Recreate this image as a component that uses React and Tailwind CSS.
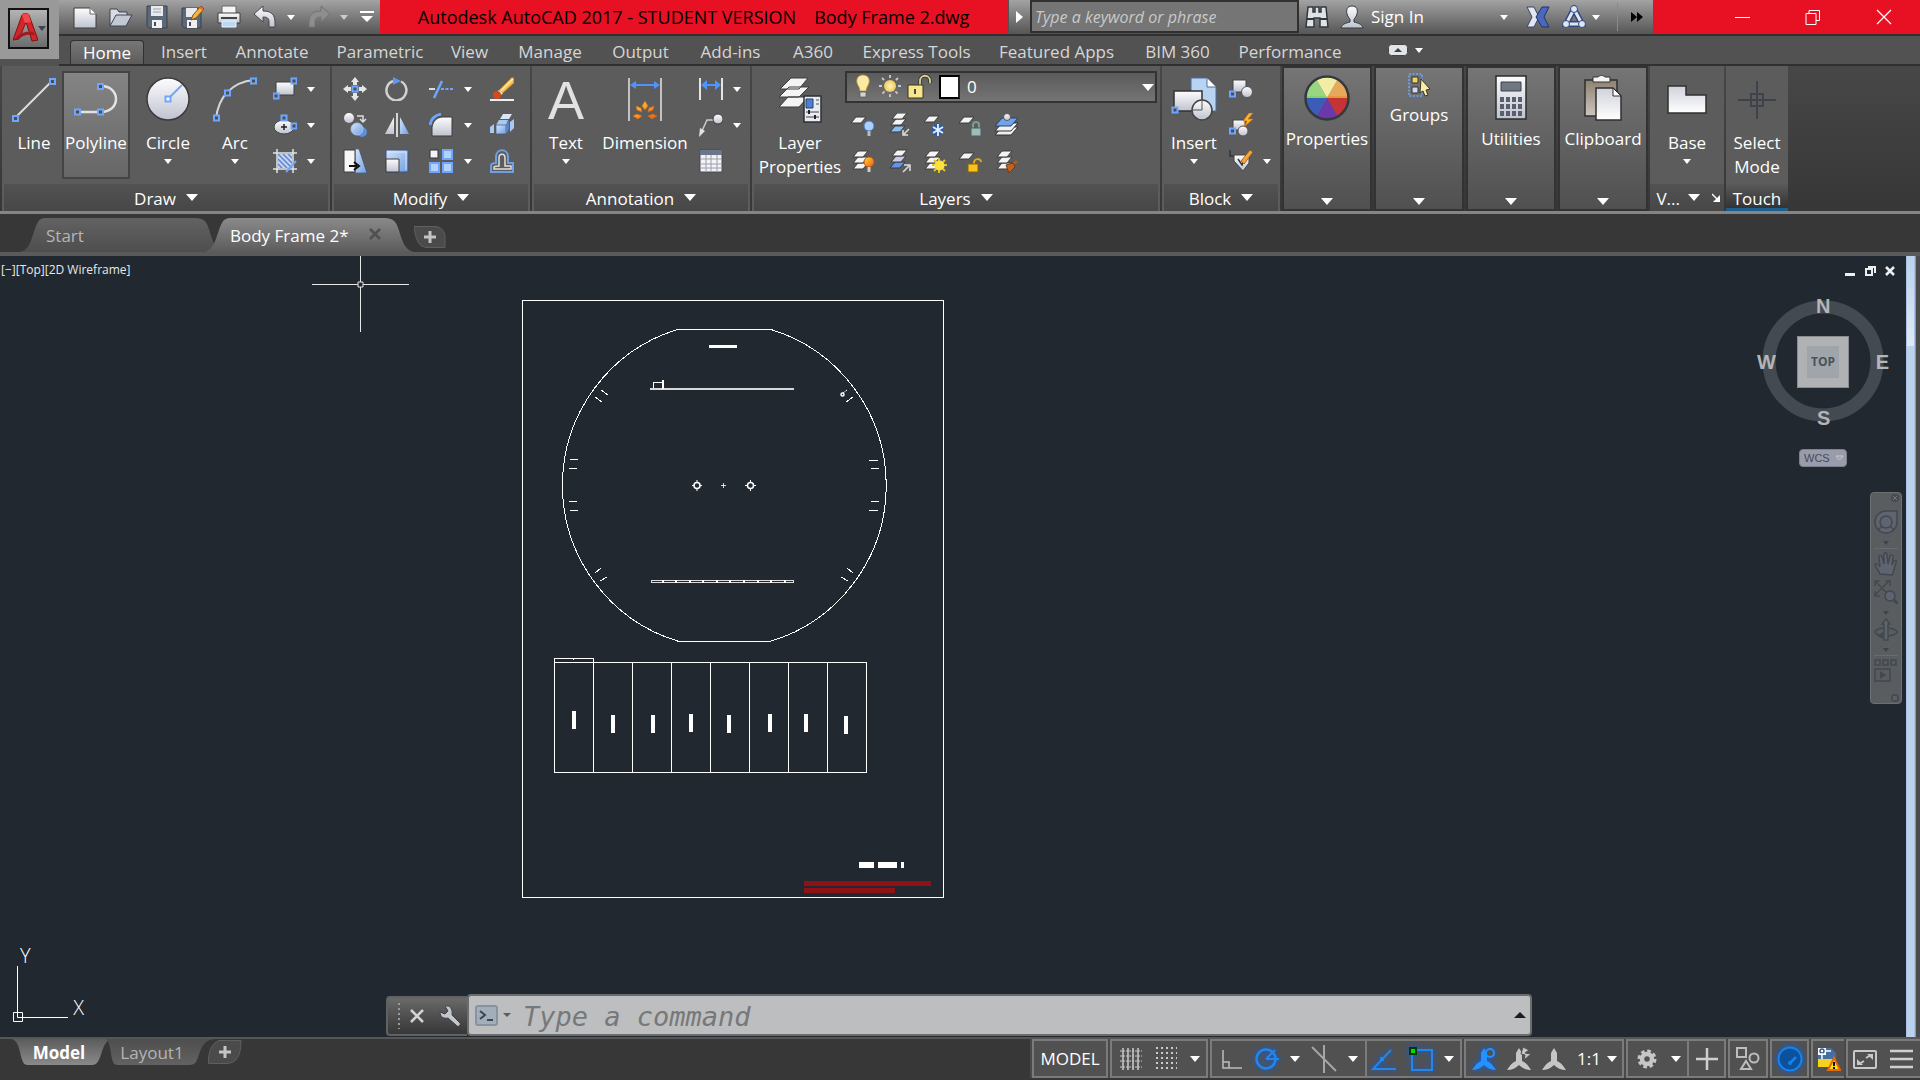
import React from "react";

const cx = (...names) => names.filter(Boolean).join(" ");

/* ---------- shared drawing helpers ---------- */

function Defs() {
  return (
    <svg width="0" height="0" className="absolute" aria-hidden="true">
      <defs>
        <linearGradient id="paper" x1="0" y1="0" x2="0" y2="1">
          <stop offset="0" stopColor="#fdfdfe" />
          <stop offset="1" stopColor="#bfc3cf" />
        </linearGradient>
        <linearGradient id="sheet" x1="0" y1="0" x2="0" y2="1">
          <stop offset="0" stopColor="#cfd2da" />
          <stop offset="1" stopColor="#ffffff" />
        </linearGradient>
        <linearGradient id="sky" x1="0" y1="0" x2="1" y2="1">
          <stop offset="0" stopColor="#d6e6fb" />
          <stop offset="1" stopColor="#6f9fdf" />
        </linearGradient>
        <linearGradient id="fire" x1="0" y1="0" x2="1" y2="1">
          <stop offset="0" stopColor="#ffd83a" />
          <stop offset="1" stopColor="#ee5a12" />
        </linearGradient>
        <linearGradient id="board" x1="0" y1="0" x2="0" y2="1">
          <stop offset="0" stopColor="#8d8171" />
          <stop offset="1" stopColor="#cdc6bf" />
        </linearGradient>
        <linearGradient id="tabOn" x1="0" y1="0" x2="0" y2="1">
          <stop offset="0" stopColor="#8a8a8a" />
          <stop offset="1" stopColor="#5c5c5c" />
        </linearGradient>
        <linearGradient id="tabOff" x1="0" y1="0" x2="0" y2="1">
          <stop offset="0" stopColor="#626262" />
          <stop offset="1" stopColor="#4e4e4e" />
        </linearGradient>
        <linearGradient id="footOn" x1="0" y1="0" x2="0" y2="1">
          <stop offset="0" stopColor="#5c5c5c" />
          <stop offset="1" stopColor="#8a8a8a" />
        </linearGradient>
        <linearGradient id="footOff" x1="0" y1="0" x2="0" y2="1">
          <stop offset="0" stopColor="#4e4e4e" />
          <stop offset="1" stopColor="#626262" />
        </linearGradient>
        <radialGradient id="sun">
          <stop offset="0" stopColor="#fff6b8" />
          <stop offset="1" stopColor="#f0c860" />
        </radialGradient>
      </defs>
    </svg>
  );
}

function Ico({ w = 24, h = 24, className, children }) {
  return (
    <svg width={w} height={h} viewBox={`0 0 ${w} ${h}`} fill="none" className={cx("shrink-0", className)} aria-hidden="true">
      {children}
    </svg>
  );
}

function Tri({ size = "sm", className }) {
  if (size === "lg")
    return (
      <Ico w={12} h={7} className={className}>
        <path d="M0 0h12L6 7z" fill="#fff" />
      </Ico>
    );
  return (
    <Ico w={8} h={5} className={className}>
      <path d="M0 0h8L4 5z" fill="#fff" />
    </Ico>
  );
}

/* blue grip square, centred on x,y */
const Grip = ({ x, y, fill = "#4d4d4d" }) => (
  <rect x={x - 2.5} y={y - 2.5} width="5" height="5" fill={fill} stroke="#6ea6ff" strokeWidth="2" />
);

const Sheet = ({ x, y, fill = "#f4f4f6" }) => (
  <path d={`M${x + 5} ${y}h10l-5 6h-10z`} fill={fill} stroke="#3a3a3a" strokeWidth="1" />
);

/* ---------- quick access icons ---------- */

const NewIcon = () => (
  <Ico><path d="M1 3h16l6 6v14H1z" fill="url(#paper)" stroke="#3c3c3c" /><path d="M17 3v6h6" fill="#fff" stroke="#666" /></Ico>
);
const OpenIcon = () => (
  <Ico><path d="M1 21V4h7l2 3h8v4" fill="#d9dce2" stroke="#3c4450" /><path d="M1 21l6-11h16l-6 11z" fill="#c3c9d4" stroke="#3c4450" /></Ico>
);
const SaveIcon = () => (
  <Ico w={22}><path d="M1 1h20v22H3l-2-2z" fill="#5d6878" stroke="#39424f" /><path d="M5 1h12v10H5z" fill="#e9ebef" /><path d="M7 4h8M7 7h8" stroke="#9aa2ad" /><path d="M6 15h10v8H6z" fill="#f1f1f4" /><path d="M8 17h2v4H8z" fill="#444c58" /></Ico>
);
const SaveAsIcon = () => (
  <Ico><path d="M1 3h19v20H3l-2-2z" fill="#5d6878" stroke="#39424f" /><path d="M5 3h11v9H5z" fill="#e9ebef" /><path d="M6 15h10v8H6z" fill="#f1f1f4" /><path d="M8 17h2v4H8z" fill="#444c58" /><path d="M10 15l2-5 8-9 3 3-8 9z" fill="#f5b73b" stroke="#8a4b12" /><path d="M19 2l3 3" stroke="#e8672c" strokeWidth="2" /></Ico>
);
const PrintIcon = () => (
  <Ico><path d="M5 1h14v9H5z" fill="#f5f5f7" stroke="#666" /><path d="M1 8h22v10H1z" fill="url(#paper)" stroke="#3f3f3f" /><path d="M4 12h16v2H4z" fill="#444" /><path d="M5 16h14v6H5z" fill="#bcd8f7" stroke="#e8f2fd" /></Ico>
);
const UndoIcon = () => (
  <Ico><path d="M1 9l9-8v5c9 0 12 4 12 12v4h-6v-5c0-4-2-5-6-5v5z" fill="url(#paper)" stroke="#484848" /></Ico>
);
const RedoIcon = () => (
  <Ico><path d="M23 9l-9-8v5C5 6 2 10 2 18v4h6v-5c0-4 2-5 6-5v5z" fill="#8e8e8e" stroke="#737373" /></Ico>
);

/* ---------- ribbon icons ---------- */

const LineIcon = () => (
  <Ico w={46} h={46}><path d="M4 41L41 4" stroke="#dcdcdc" strokeWidth="2" /><Grip x={4.5} y={41.5} /><Grip x={41.5} y={4.5} /></Ico>
);
const PolyIcon = () => (
  <Ico w={46} h={46}><path d="M4 35h24c20 0 20-26 0-26" stroke="#e2e2e2" strokeWidth="2.5" /><Grip x={4.5} y={35} /><Grip x={27.5} y={35} /><Grip x={27.5} y={9.5} /></Ico>
);
const CircleIcon = () => (
  <Ico w={46} h={46}><circle cx="23" cy="22" r="21" fill="url(#paper)" stroke="#3b3b3b" strokeWidth="1.5" /><path d="M23 22L37 8" stroke="#6ea6ff" strokeWidth="2" /><Grip x={23} y={22} fill="#fff" /></Ico>
);
const ArcIcon = () => (
  <Ico w={46} h={46}><path d="M4 42C6 20 20 5 42 3" stroke="#d6d6d6" strokeWidth="2" /><Grip x={4.5} y={41} /><Grip x={15.5} y={16} /><Grip x={41.5} y={4} /></Ico>
);
const RectIcon = () => (
  <Ico><path d="M3 5h18v13H3z" fill="url(#paper)" stroke="#3e3e3e" /><Grip x={21} y={4} /><Grip x={3} y={19} /></Ico>
);
const EllipseIcon = () => (
  <Ico><ellipse cx="11" cy="14" rx="10" ry="7" fill="url(#paper)" stroke="#444" /><path d="M11 11v6M8 14h6" stroke="#222" strokeWidth="1.5" /><Grip x={11} y={5} /><Grip x={21} y={13} /></Ico>
);
const HatchIcon = () => (
  <Ico><path d="M5 5h14v14H5z" fill="#c9d3ea" /><path d="M5 10l9 9M5 5l14 14M10 5l9 9M5 15l4 4M15 5l4 4" stroke="#5a86d8" strokeWidth="1.5" /><path d="M4 0v24M20 0v24M0 4h24M0 20h24" stroke="#e4e4e4" strokeWidth="1.5" /><path d="M23 12L13 23" stroke="#6ea6ff" strokeWidth="2" /></Ico>
);
const MoveIcon = () => (
  <Ico><path d="M12 0l4 5h-2v3h-4V5H8zM12 24l-4-5h2v-3h4v3h2zM0 12l5-4v2h3v4H5v2zM24 12l-5 4v-2h-3v-4h3V8z" fill="#e6e6e6" /><Grip x={12} y={12} /></Ico>
);
const RotateIcon = () => (
  <Ico><path d="M16 4.500A10 10 0 1 1 8 4" stroke="#d2d2d2" strokeWidth="2.500" /><path d="M8 0l8 4-8 4z" fill="#5b97f3" /></Ico>
);
const TrimIcon = () => (
  <Ico><path d="M0 12h6" stroke="#dcdcdc" strokeWidth="2" /><path d="M5 21L13 4" stroke="#6ea6ff" strokeWidth="2.500" /><path d="M12 12h12" stroke="#6ea6ff" strokeWidth="2" strokeDasharray="3 1.500" /></Ico>
);
const EraseIcon = () => (
  <Ico><path d="M9 13L22 0l2 1v5L13 16z" fill="#f3bf4a" stroke="#a3701c" strokeWidth="0.800" /><path d="M11 14L23 2" stroke="#fdeab0" strokeWidth="1.500" /><path d="M9 13l4 3-2 2-4-3z" fill="#eee" /><ellipse cx="7" cy="18" rx="4" ry="4" fill="#d8491a" /><path d="M0 23h24" stroke="#f0f0f0" strokeWidth="2" /></Ico>
);
const CopyIcon = () => (
  <Ico><circle cx="6" cy="5" r="5" fill="url(#paper)" /><path d="M14 3h6v5M17 6l3 3 3-3" stroke="#ddd" strokeWidth="1.500" /><circle cx="19" cy="19" r="5" fill="#5f8fd8" /><circle cx="14" cy="16" r="6" fill="url(#sky)" stroke="#a9c6f0" /></Ico>
);
const MirrorIcon = () => (
  <Ico><path d="M9 4v17H0z" fill="url(#paper)" /><path d="M15 4v17h9z" fill="url(#sky)" /><path d="M12 0v24" stroke="#d5d5d5" strokeWidth="2" /></Ico>
);
const FilletIcon = () => (
  <Ico><path d="M3 23V14C4 8 8 4 14 4h9v19z" fill="url(#paper)" stroke="#3d3d3d" /><path d="M1 12C2 6 6 2 12 1" stroke="#6ea6ff" strokeWidth="2.500" /></Ico>
);
const BoxesIcon = () => (
  <Ico><path d="M10 6l3-5h9l-3 5z" fill="#d9e6fa" /><path d="M6 12l3-5h9l-2 5z" fill="#a9c8f2" /><path d="M6 12h10v9H6z" fill="url(#sky)" stroke="#3c5480" strokeWidth="0.700" /><path d="M16 12l3-5v9l-3 5z" fill="#5a86c8" /><path d="M20 9l4-3v9l-4 4zM0 14l4-3v9H0z" fill="#a9c8f2" /></Ico>
);
const StretchIcon = () => (
  <Ico><path d="M12 0h4l8 24H12z" fill="url(#sky)" stroke="#33507d" strokeWidth="0.700" /><path d="M1 1h11v22H1z" fill="#f6f6f8" stroke="#3d3d3d" /><path d="M6 17h8M11 13l5 4-5 4" stroke="#111" strokeWidth="2" /></Ico>
);
const ScaleIcon = () => (
  <Ico><path d="M1 1h22v22H1z" fill="url(#sky)" stroke="#3a5488" /><path d="M3 3h18v18" stroke="#d7e5fb" /><path d="M1 10h13v13H1z" fill="url(#paper)" stroke="#3d3d3d" /></Ico>
);
const ArrayIcon = () => (
  <Ico><path d="M1 1h8v8H1z" fill="#f4f4f6" stroke="#333" /><path d="M14 1h9v9h-9zM1 14h9v9H1zM14 14h9v9h-9z" fill="#b7d2fa" stroke="#6ea6ff" strokeWidth="2" /></Ico>
);
const OffsetIcon = () => (
  <Ico><path d="M1 23v-6c0-2 2-3 5-3V8c0-9 12-9 12 0v6h5v9z" stroke="#6f9fdf" strokeWidth="2" /><path d="M4 20v-2c1-1 3-1 5-1V9c0-5 6-5 6 0v8h6v3z" stroke="#e0e0e0" strokeWidth="1.500" /></Ico>
);
const DimensionIcon = () => (
  <Ico w={46} h={46}>
    <path d="M7 1v43M39 1v43" stroke="#e4e4e4" strokeWidth="1.500" />
    <path d="M12 8h22" stroke="#4f93ff" strokeWidth="2" /><path d="M8 8l6-4v8zM38 8l-6-4v8z" fill="#4f93ff" />
    <path d="M23 24l3 5-3 4-3-4zM14 29l5 2 1 4-5-2zM32 29l-5 2-1 4 5-2zM11 39l4-2 5 2-4 3zM35 39l-4-2-5 2 4 3z" fill="url(#fire)" stroke="#d9650d" strokeWidth="0.600" />
  </Ico>
);
const LinearIcon = () => (
  <Ico><path d="M1 1v22M23 1v22" stroke="#e4e4e4" strokeWidth="2" /><path d="M6 8h12" stroke="#4f93ff" strokeWidth="2" /><path d="M2 8l6-5v10zM22 8l-6-5v10z" fill="#4f93ff" /></Ico>
);
const LeaderIcon = () => (
  <Ico><path d="M2 20L8 7h7" stroke="#ccc" strokeWidth="1.500" /><path d="M0 24l1-9 5 3z" fill="#e2e2e2" /><circle cx="19" cy="6" r="5" fill="url(#paper)" stroke="#3c3c3c" /></Ico>
);
const TableIcon = () => (
  <Ico><path d="M1 1h22v22H1z" fill="#f3f3f6" stroke="#44484f" /><path d="M1 1h22v5H1z" fill="#6a7689" /><path d="M1 10h22M1 15h22M1 19h22M7 6v17M12 6v17M18 6v17" stroke="#9a9fab" /></Ico>
);
const LayerPropsIcon = () => (
  <Ico w={46} h={46}>
    <path d="M11 20h20L22 30H2zM12 10h20L22 20H2zM14 1h17L22 12H3z" fill="#f4f4f4" stroke="#3c3c3c" />
    <path d="M27 19h17v26H27z" fill="#e8ebf1" stroke="#2c2f35" strokeWidth="1.500" />
    <path d="M29 22h7v9h-7z" fill="#4e7fd0" stroke="#24416e" /><path d="M39 23h3M39 27h3" stroke="#555" />
    <path d="M29 35h13M29 40h13" stroke="#444" /><path d="M32 33v4M38 38v4" stroke="#222" strokeWidth="2" />
  </Ico>
);

const LayerStack = ({ top = "#f4f4f6", low = "#f4f4f6" }) => (
  <>
    <Sheet x={2} y={14} fill={low} />
    <Sheet x={2} y={8} fill={low} />
    <Sheet x={2} y={2} fill={top} />
  </>
);
const layerIcons = [
  ["Off", <><Sheet x={0} y={4} /><circle cx="18" cy="13" r="5" fill="#a9d0ff" stroke="#4a7cc4" /><path d="M18 18v5" stroke="#bbb" strokeWidth="3" /></>],
  ["Isolate", <><Sheet x={3} y={13} fill="#8bbcf4" /><Sheet x={4} y={6} /><Sheet x={5} y={0} /><path d="M22 16l-5 5M16 17v5h5" stroke="#ddd" strokeWidth="1.500" /></>],
  ["Freeze", <><Sheet x={1} y={3} /><g stroke="#2c5da8" strokeWidth="5"><path d="M15 11v12M10 14l10 6M20 14l-10 6" /></g><path d="M15 11v12M10 14l10 6M20 14l-10 6" stroke="#e3efff" strokeWidth="1.800" /></>],
  ["Lock", <><Sheet x={0} y={4} /><path d="M14 15v-3c0-4 6-4 6 0v3" stroke="#7d9c98" strokeWidth="2" /><path d="M12 15h10v8H12z" fill="#9fbcb8" stroke="#46605d" /></>],
  ["Make Current", <><path d="M7 14h16l-7 8H0z" fill="#f0f0f2" stroke="#333" /><path d="M7 10h16l-7 8H0z" fill="#f0f0f2" stroke="#333" /><path d="M7 5h16l-7 8H0z" fill="#6ea3ea" stroke="#28426b" /><circle cx="12" cy="4" r="3.500" fill="url(#paper)" stroke="#555" /></>],
  ["On", <><LayerStack /><circle cx="18" cy="13" r="5" fill="url(#fire)" stroke="#c1570c" /><path d="M18 18v5" stroke="#ccc" strokeWidth="3" /></>],
  ["Unisolate", <><Sheet x={3} y={13} fill="#5d96ea" /><Sheet x={4} y={7} fill="#c9cbe4" /><Sheet x={5} y={1} /><path d="M16 23l6-6M17 16h6v6" stroke="#ddd" strokeWidth="1.500" /></>],
  ["Thaw", <><LayerStack /><path d="M16 9v15M9 16h15M11 11l11 11M22 11L11 22" stroke="#e8c21c" strokeWidth="2" /><circle cx="16.500" cy="16.500" r="5" fill="#ffdf3c" /></>],
  ["Unlock", <><Sheet x={0} y={4} /><path d="M15 16v-2c0-5 7-5 7-1" stroke="#e0aa14" strokeWidth="2" /><path d="M9 15h10v8H9z" fill="#fbc21e" stroke="#8a6205" /></>],
  ["Match", <><LayerStack /><path d="M22 12l-5 4" stroke="#a5602a" strokeWidth="2.500" /><path d="M11 16l7-2 2 4-6 6z" fill="#c2621f" stroke="#763a10" /></>],
];

const InsertIcon = () => (
  <Ico w={46} h={46}>
    <path d="M20 1h16l9 9v24H20z" fill="#b9d3f3" stroke="#4a6c9c" /><path d="M36 1v9h9" fill="#fff" stroke="#4a6c9c" />
    <path d="M3 14h28v20H3z" fill="url(#paper)" stroke="#333" strokeWidth="1.500" />
    <circle cx="31" cy="33" r="10" fill="url(#paper)" stroke="#444" strokeWidth="1.500" /><path d="M31 23v10H21" stroke="#555" /><Grip x={4} y={33} />
  </Ico>
);
const BlockCreateIcon = () => (
  <Ico><path d="M4 3h13v12H4z" fill="url(#paper)" stroke="#444" /><circle cx="18" cy="15" r="5.500" fill="url(#paper)" stroke="#555" /><Grip x={3.500} y={17} /></Ico>
);
const BlockEditIcon = () => (
  <Ico><path d="M4 7h12v10H4z" fill="url(#paper)" stroke="#444" /><circle cx="14" cy="18" r="5" fill="url(#paper)" stroke="#555" /><Grip x={3.500} y={18} /><path d="M20 0l-6 8h4l-3 6 9-8h-5l5-6z" fill="#ffb52a" stroke="#d06a10" strokeWidth="0.700" /></Ico>
);
const AttributeIcon = () => (
  <Ico><path d="M1 1v6h6" stroke="#333" strokeWidth="1.500" /><path d="M5 6h15v8l-6 8-9-10z" fill="url(#paper)" stroke="#444" /><path d="M9 10l4 6 2-5" stroke="#333" strokeWidth="1.500" /><path d="M12 12l9-11 3 2-9 12z" fill="#f3a73b" stroke="#9a4f14" strokeWidth="0.800" /></Ico>
);

const wheel = ["#f1e994", "#e39a3c", "#c43434", "#6a38a8", "#3b5cb8", "#86cf6c"];
const WheelIcon = () => (
  <Ico w={46} h={46}>
    {wheel.map((c, i) => (
      <path key={c} d="M23 23L12 4A22 22 0 0 1 34 4z" fill={c} transform={`rotate(${i * 60} 23 23)`} />
    ))}
    <circle cx="23" cy="23" r="21.500" stroke="#33383f" strokeWidth="2.500" />
    <path d="M3 21C5-3 41-3 43 21z" fill="#fff" opacity="0.150" />
  </Ico>
);
const GroupsIcon = () => (
  <Ico><path d="M2 1h13v22H2z" stroke="#6ea6ff" strokeWidth="1.500" strokeDasharray="2 1.500" /><path d="M5 4h6v6H5z" fill="#e9d46a" stroke="#333" /><path d="M5 14h6v6H5z" fill="#c9dcec" stroke="#333" /><path d="M14 6l9 10-4 1 2 5-3 1-2-5-3 2z" fill="#f3ecab" stroke="#3a3620" /></Ico>
);
const CalcIcon = () => (
  <Ico w={32} h={46}>
    <path d="M1 1h30v43H1z" fill="url(#paper)" stroke="#2c2c2c" strokeWidth="1.500" /><path d="M6 7h20v9H6z" fill="#6f7783" stroke="#3c424b" />
    {[22, 29, 36].map((y) => [5, 11, 17, 23].map((x) => <rect key={`${x}-${y}`} x={x} y={y} width="4" height="5" fill="#59606c" />))}
  </Ico>
);
const ClipboardIcon = () => (
  <Ico w={38} h={46}>
    <path d="M1 5h32v36H1z" fill="url(#board)" stroke="#2f2f2f" strokeWidth="1.500" /><path d="M9 2h5c2-2 5-2 7 0h5v5H9z" fill="#f4f4f4" stroke="#333" />
    <path d="M12 13h17l8 8v24H12z" fill="url(#sheet)" stroke="#2f2f2f" strokeWidth="1.500" /><path d="M29 13v8h8z" fill="#fff" stroke="#2f2f2f" />
  </Ico>
);
const BaseIcon = () => (
  <Ico w={40} h={30}><path d="M1 1h18v9h20v18H1z" fill="url(#sheet)" stroke="#303030" strokeWidth="1.500" /></Ico>
);
const TouchIcon = () => (
  <Ico w={38} h={38}><path d="M19 0v38M0 19h38M13 13h12v12H13z" stroke="#3e434b" strokeWidth="2" /></Ico>
);

/* ---------- title bar ---------- */

function IconButton({ label, className, children }) {
  return (
    <button type="button" aria-label={label} className={cx("flex shrink-0 items-center justify-center", className)}>
      {children}
    </button>
  );
}

function QuickAccess() {
  return (
    <div className="flex w-[321px] shrink-0 items-center bg-linear-to-b from-[#a3a3a3] to-[#565656] pl-[11px]">
      <IconButton label="New" className="w-[30px]"><NewIcon /></IconButton>
      <IconButton label="Open" className="ml-[6px] w-[30px]"><OpenIcon /></IconButton>
      <IconButton label="Save" className="ml-[6px] w-[30px]"><SaveIcon /></IconButton>
      <IconButton label="Save As" className="ml-[6px] w-[30px]"><SaveAsIcon /></IconButton>
      <IconButton label="Plot" className="ml-[6px] w-[30px]"><PrintIcon /></IconButton>
      <IconButton label="Undo" className="ml-[6px] w-[30px]"><UndoIcon /></IconButton>
      <IconButton label="Undo list" className="w-[22px]"><Tri /></IconButton>
      <IconButton label="Redo" className="ml-[2px] w-[30px]"><RedoIcon /></IconButton>
      <IconButton label="Redo list" className="w-5"><Tri className="opacity-60" /></IconButton>
      <IconButton label="Customize toolbar" className="ml-[5px] w-4">
        <Ico w={14} h={12}><path d="M0 1h14" stroke="#fff" strokeWidth="2" /><path d="M1 5h12l-6 6z" fill="#fff" /></Ico>
      </IconButton>
    </div>
  );
}

function TitleBar() {
  return (
    <div className="flex h-[34px]">
      <QuickAccess />
      <div className="flex min-w-0 flex-1 items-center justify-center gap-[18px] overflow-hidden bg-[#e81123] text-lg whitespace-nowrap text-black">
        <span>Autodesk AutoCAD 2017 - STUDENT VERSION</span>
        <span>Body Frame 2.dwg</span>
      </div>
      <IconButton label="Collapse search" className="ml-[2px] w-[21px] bg-linear-to-b from-[#a3a3a3] to-[#565656]">
        <Ico w={7} h={12}><path d="M0 0l7 6-7 6z" fill="#fff" /></Ico>
      </IconButton>
      <input
        aria-label="Search"
        placeholder="Type a keyword or phrase"
        className="h-[33px] w-[269px] shrink-0 border-2 border-[#303030] bg-[#757575] pl-[3px] text-base font-medium text-white italic placeholder:text-[#c9c9c9]"
      />
      <div className="flex w-[354px] shrink-0 items-center bg-linear-to-b from-[#a3a3a3] to-[#565656] text-[17px] text-white">
        <IconButton label="Search help" className="ml-[5px] w-[26px]">
          <Ico><path d="M3 2h5v5h2V2h4v5h2V2h5l2 20h-8v-9h-6v9H1z" fill="#e0e3e6" stroke="#30383c" strokeWidth="1.500" /><path d="M2 14h7M15 14h7" stroke="#30383c" strokeWidth="2" /></Ico>
        </IconButton>
        <button type="button" className="ml-[10px] flex items-center">
          <Ico><path d="M12 1c-5 0-6 4-5 8 1 3 2 4 3 5v3c-4 1-8 2-9 6h22c-1-4-5-5-9-6v-3c1-1 2-2 3-5 1-4 0-8-5-8z" fill="url(#paper)" stroke="#333b44" /></Ico>
          <span className="ml-[7px]">Sign In</span>
        </button>
        <IconButton label="Account menu" className="ml-[70px] w-5"><Tri /></IconButton>
        <IconButton label="Exchange apps" className="ml-3 w-6">
          <Ico><path d="M1 2h7l5 10-5 10H1l5-10z" fill="#e3e6ee" stroke="#34456d" /><path d="M23 2h-7l-6 10 6 10h7l-5-10z" fill="#4a69bd" stroke="#1f3469" /></Ico>
        </IconButton>
        <IconButton label="Autodesk 360" className="ml-3 w-6">
          <Ico><path d="M12 4l8 15H4z" stroke="#2f4780" strokeWidth="6" /><path d="M12 4l8 15H4z" stroke="#dfe6f2" strokeWidth="3" /><g fill="#dfe6f2" stroke="#2f4780"><circle cx="12" cy="4" r="3.500" /><circle cx="4" cy="19" r="3.500" /><circle cx="20" cy="19" r="3.500" /></g></Ico>
        </IconButton>
        <IconButton label="Autodesk 360 menu" className="w-5"><Tri /></IconButton>
        <span className="mx-auto h-7 w-px bg-[#8b8b8b]" />
        <IconButton label="More" className="mr-[9px] w-[14px]">
          <Ico w={12} h={10}><path d="M0 0l6 5-6 5zM6 0l6 5-6 5z" fill="#000" /></Ico>
        </IconButton>
      </div>
      <div className="flex w-[267px] shrink-0 bg-[#e81123]">
        <IconButton label="Minimize" className="ml-[54px] w-[71px]"><Ico w={16} h={16}><path d="M0 8.500h15" stroke="#fff" /></Ico></IconButton>
        <IconButton label="Restore" className="w-[69px]"><Ico w={16} h={16}><path d="M1 4.500h10v11H1zM4 4V1.500h10.500v10H11" stroke="#fff" /></Ico></IconButton>
        <IconButton label="Close" className="w-[73px]"><Ico w={16} h={16}><path d="M1 1l14 14M15 1L1 15" stroke="#fff" strokeWidth="1.200" /></Ico></IconButton>
      </div>
    </div>
  );
}

const ribbonTabs = [
  ["Home", "w-[74px]"], ["Insert", "w-[80px]"], ["Annotate", "w-[96px]"], ["Parametric", "w-[120px]"], ["View", "w-[59px]"],
  ["Manage", "w-[102px]"], ["Output", "w-[79px]"], ["Add-ins", "w-[101px]"], ["A360", "w-[64px]"], ["Express Tools", "w-[143px]"],
  ["Featured Apps", "w-[137px]"], ["BIM 360", "w-[105px]"], ["Performance", "w-[120px]"],
];

function Header() {
  return (
    <header className="flex bg-[#525252]">
      <div className="h-[59px] w-[59px] shrink-0 bg-[#999] pt-2 pl-2">
        <button type="button" aria-label="Application menu" className="flex h-[41px] w-[41px] items-center border-2 border-[#111] bg-linear-to-b from-[#b4b4b4] to-[#6c6c6c] pl-[3px]">
          <Ico w={25} h={32}>
            <path d="M0 27L9 2c1-2 6-2 7 0l9 25-6 1L13 9 6 26z" fill="#d3262b" stroke="#7d1216" />
            <path d="M9 2c1-2 6-2 7 0l2 7-6 1z" fill="#ef4b4b" />
            <path d="M2 26c4-6 10-8 18-7l2 3C15 21 9 22 5 27z" fill="#a5181d" />
          </Ico>
          <Ico w={8} h={5}><path d="M0 0h8L4 5z" fill="#3a4350" /></Ico>
        </button>
      </div>
      <div className="min-w-0 flex-1">
        <TitleBar />
        <nav className="flex h-8 items-end border-y-2 border-t-[#303030] border-b-[#303030] bg-[#525252]">
          <div className="flex h-full items-stretch pt-1 pl-[11px]">
            {ribbonTabs.map(([name, w], i) => (
              <button
                key={name}
                type="button"
                className={cx(
                  "flex items-center justify-center text-[17px] whitespace-nowrap",
                  w,
                  i === 0 ? "rounded-t border border-b-0 border-[#303030] bg-linear-to-b from-[#777] to-[#5c5c5c] text-white" : "text-[#d6d6d6]"
                )}
              >
                {name}
              </button>
            ))}
            <button type="button" aria-label="Ribbon display" className="-mt-1 ml-[38px] flex items-center gap-[7px]">
              <Ico w={20} h={12}><rect x="0.500" y="0.500" width="19" height="11" rx="3" fill="#e3e4e8" stroke="#444" /><path d="M6 8l4-4 4 4z" fill="#3c434d" /></Ico>
              <Tri />
            </button>
          </div>
        </nav>
      </div>
    </header>
  );
}

/* ---------- ribbon ---------- */

function Panel({ title, className, children }) {
  return (
    <section className={cx("flex shrink-0 flex-col bg-[#5c5c5c]", className)}>
      <div className="flex h-[118px] pt-[5px]">{children}</div>
      <button type="button" className="mx-[2px] flex h-[27px] items-center justify-center gap-[10px] bg-linear-to-b from-[#525252] to-[#474747] pt-[3px] text-[17px] text-white">
        {title}
        <Tri size="lg" className="mb-1" />
      </button>
    </section>
  );
}

function BigButton({ label, icon, arrow, active, className }) {
  return (
    <button
      type="button"
      className={cx(
        "flex h-[108px] shrink-0 flex-col items-center pt-[6px] text-center text-[17px] leading-6 text-white",
        active && "bg-linear-to-b from-[#858585] to-[#666] outline-2 -outline-offset-2 outline-[#444]",
        className
      )}
    >
      <span className="flex h-[46px] items-center justify-center">{icon}</span>
      <span className="mt-2">{label}</span>
      {arrow && <Tri className="mt-1" />}
    </button>
  );
}

function Tool({ label, className, children }) {
  return <IconButton label={label} className={cx("h-9", className)}>{children}</IconButton>;
}

function ToolRow({ label, arrow = true, children }) {
  return (
    <div className="flex">
      <Tool label={label} className="w-7">{children}</Tool>
      {arrow && <Tool label={`${label} options`} className="w-6"><Tri /></Tool>}
    </div>
  );
}

function Collapsed({ label, icon, high }) {
  return (
    <button type="button" className="flex h-[145px] w-[90px] shrink-0 flex-col items-center border-2 border-[#333] bg-linear-to-b from-[#757575] to-[#505050] text-[17px] leading-6 text-white">
      <span className={cx("flex items-center", high ? "mt-[5px] h-6" : "mt-[7px] h-[46px]")}>{icon}</span>
      <span className="mt-[6px]">{label}</span>
      <Tri size="lg" className="mt-auto mb-[4px]" />
    </button>
  );
}

function LayerSelect() {
  return (
    <div className="relative flex h-8 w-[312px] items-center border-2 border-[#333] bg-linear-to-b from-[#5b5b5b] to-[#747474]">
      <Ico w={84} h={26} className="ml-2">
        <path d="M8 1c-5 0-7 4-6 8 1 3 3 5 3 8h6c0-3 2-5 3-8 1-4-1-8-6-8z" fill="#fbe9a6" stroke="#b7952f" strokeWidth="0.800" /><path d="M5 18h6v5H5z" fill="#cfd3d8" stroke="#555" strokeWidth="0.700" />
        <path d="M35 1v22M24 12h22M27 4l16 16M43 4L27 20" stroke="#c9c9c9" strokeWidth="1.800" strokeDasharray="3 16" /><circle cx="35" cy="12" r="6" fill="url(#sun)" />
        <path d="M65 12V7c0-7 10-7 10 0v2" stroke="#3a3524" strokeWidth="3.500" /><path d="M65 12V7c0-7 10-7 10 0v2" stroke="#d9cf9c" strokeWidth="1.800" /><path d="M53 11h15v13H53z" fill="#f7e58f" stroke="#3d3716" /><path d="M60 15v5" stroke="#444" strokeWidth="2" />
      </Ico>
      <span className="h-6 w-[21px] border-2 border-black border-r-[#222] bg-white" />
      <select aria-label="Current layer" className="h-full min-w-0 flex-1 appearance-none bg-transparent pl-[7px] text-[17px] text-white">
        <option>0</option>
      </select>
      <Tri size="lg" className="pointer-events-none absolute right-px" />
    </div>
  );
}

function Ribbon() {
  return (
    <div className="flex h-[148px] items-start gap-[2px] overflow-hidden border-b-[3px] border-[#858585] bg-linear-to-b from-[#474747] to-[#373737] pl-[2px]">
      <Panel title="Draw" className="w-[328px]">
        <BigButton label="Line" icon={<LineIcon />} className="ml-1 w-[56px]" />
        <BigButton label="Polyline" icon={<PolyIcon />} active className="w-[68px]" />
        <BigButton label="Circle" icon={<CircleIcon />} arrow className="ml-1 w-[68px]" />
        <BigButton label="Arc" icon={<ArcIcon />} arrow className="w-[66px]" />
        <div className="ml-[3px]">
          <ToolRow label="Rectangle"><RectIcon /></ToolRow>
          <ToolRow label="Ellipse"><EllipseIcon /></ToolRow>
          <ToolRow label="Hatch"><HatchIcon /></ToolRow>
        </div>
      </Panel>
      <Panel title="Modify" className="w-[198px]">
        <div className="ml-[2px] grid grid-cols-[42px_42px_46px_8px_60px] content-start justify-items-center">
          <Tool label="Move"><MoveIcon /></Tool>
          <Tool label="Rotate"><RotateIcon /></Tool>
          <Tool label="Trim"><TrimIcon /></Tool>
          <Tool label="Trim options"><Tri /></Tool>
          <Tool label="Erase"><EraseIcon /></Tool>
          <Tool label="Copy"><CopyIcon /></Tool>
          <Tool label="Mirror"><MirrorIcon /></Tool>
          <Tool label="Fillet"><FilletIcon /></Tool>
          <Tool label="Fillet options"><Tri /></Tool>
          <Tool label="Explode"><BoxesIcon /></Tool>
          <Tool label="Stretch"><StretchIcon /></Tool>
          <Tool label="Scale"><ScaleIcon /></Tool>
          <Tool label="Array"><ArrayIcon /></Tool>
          <Tool label="Array options"><Tri /></Tool>
          <Tool label="Offset"><OffsetIcon /></Tool>
        </div>
      </Panel>
      <Panel title="Annotation" className="w-[218px]">
        <BigButton label="Text" icon={<span className="font-['Liberation_Sans',sans-serif] text-[54px] leading-[46px] text-[#e2e2e2]" aria-hidden="true">A</span>} arrow className="ml-1 w-[60px]" />
        <BigButton label="Dimension" icon={<DimensionIcon />} className="ml-1 w-[90px]" />
        <div className="ml-[7px]">
          <ToolRow label="Linear"><LinearIcon /></ToolRow>
          <ToolRow label="Leader"><LeaderIcon /></ToolRow>
          <ToolRow label="Table" arrow={false}><TableIcon /></ToolRow>
        </div>
      </Panel>
      <Panel title="Layers" className="w-[408px]">
        <BigButton label={<>Layer<br />Properties</>} icon={<LayerPropsIcon />} className="ml-1 w-[88px]" />
        <div className="ml-px">
          <LayerSelect />
          <div className="mt-1 grid w-[180px] grid-cols-5 content-start justify-items-center">
            {layerIcons.map(([name, art]) => (
              <Tool key={name} label={`Layer ${name}`}><Ico>{art}</Ico></Tool>
            ))}
          </div>
        </div>
      </Panel>
      <Panel title="Block" className="w-[118px]">
        <BigButton label="Insert" icon={<InsertIcon />} arrow className="w-[64px]" />
        <div className="ml-px">
          <ToolRow label="Create block" arrow={false}><BlockCreateIcon /></ToolRow>
          <ToolRow label="Edit block" arrow={false}><BlockEditIcon /></ToolRow>
          <ToolRow label="Attributes"><AttributeIcon /></ToolRow>
        </div>
      </Panel>
      <Collapsed label="Properties" icon={<WheelIcon />} />
      <Collapsed label="Groups" icon={<GroupsIcon />} high />
      <Collapsed label="Utilities" icon={<CalcIcon />} />
      <Collapsed label="Clipboard" icon={<ClipboardIcon />} />
      <section className="flex w-[74px] shrink-0 flex-col bg-[#5c5c5c]">
        <div className="flex h-[118px] justify-center pt-[5px]">
          <BigButton label="Base" icon={<BaseIcon />} arrow className="w-[66px]" />
        </div>
        <div className="flex h-[27px] items-center justify-end bg-linear-to-b from-[#525252] to-[#474747] pt-[3px] pr-1 text-[17px] text-white">
          <button type="button" className="flex items-center gap-2">V...<Tri size="lg" className="mb-1" /></button>
          <IconButton label="View settings" className="ml-3 mb-1">
            <Ico w={8} h={9}><path d="M0 1l6 6" stroke="#fff" strokeWidth="1.500" /><path d="M8 2v7H1z" fill="#fff" /></Ico>
          </IconButton>
        </div>
      </section>
      <section className="flex w-[62px] shrink-0 flex-col bg-[#5c5c5c]">
        <div className="flex h-[118px] justify-center pt-[5px]">
          <BigButton label={<>Select<br />Mode</>} icon={<TouchIcon />} className="w-[60px]" />
        </div>
        <div className="flex h-[27px] items-center justify-center border-b-[3px] border-[#1f5f8f] bg-linear-to-b from-[#5a5a5a] to-[#333] pt-[5px] text-[17px] text-white">Touch</div>
      </section>
    </div>
  );
}

/* ---------- file tabs ---------- */

function TabShape({ fill }) {
  return (
    <svg viewBox="0 0 204 34" preserveAspectRatio="none" className="absolute inset-0 h-full w-full" aria-hidden="true">
      <path d="M0 34C12 32 12 14 18 4q2-4 8-4h150q8 0 11 6c5 12 6 26 17 28z" fill={fill} />
    </svg>
  );
}

function FileTabs() {
  return (
    <div className="flex h-[42px] items-end border-b-4 border-[#5a5a5a] bg-[#373737] pl-5">
      <button type="button" className="relative -mr-5 h-[34px] w-[204px] pt-[2px] text-left text-[17px] text-[#b5b5b5]">
        <TabShape fill="url(#tabOff)" />
        <span className="relative ml-[26px]">Start</span>
      </button>
      <div className="relative flex h-[34px] w-[210px] items-center pt-[2px] text-[17px] text-white">
        <TabShape fill="url(#tabOn)" />
        <button type="button" className="relative ml-[26px] whitespace-nowrap">Body Frame 2*</button>
        <IconButton label="Close drawing" className="relative mb-1 ml-[18px] h-4 w-4">
          <Ico w={12} h={12}><path d="M1 1l10 10M11 1L1 11" stroke="#505050" strokeWidth="2.500" /></Ico>
        </IconButton>
      </div>
      <button type="button" aria-label="New drawing" className="relative mb-1 h-[22px] w-8">
        <Ico w={32} h={22}><path d="M0 .5h21q8 0 10 9v12H12Q2 21 0 .5z" fill="#4b4b4b" stroke="#5f5f5f" /><path d="M16 5v12M10 11h12" stroke="#c4c4c4" strokeWidth="3" /></Ico>
      </button>
    </div>
  );
}

/* ---------- model space ---------- */

const ticks = [
  "M601 390l7 5M595 397l7 5", "M846 402l7-5", "M601 568l-6 5M607 577l-7 4M847 568l6 5M841 577l7 4",
  "M570 459h5l3 1M569 468h5l3 1M569 502l4-1h4M570 511l4-1h4", "M869 461l3-1h6M871 469l3-1h5M871 501h4l4 1M869 510h4l5 1",
];
const slots = [[572, 711], [611, 715], [651, 715], [689, 714], [727, 715], [768, 714], [804, 714], [844, 716]];

function Drawing() {
  return (
    <svg width="424" height="600" viewBox="521 299 424 600" fill="none" stroke="#fff" shapeRendering="crispEdges" className="absolute top-[43px] left-[521px]" role="img" aria-label="Body frame drawing">
      <rect x="522.500" y="300.500" width="421" height="597" />
      <path d="M677.500 329.500H771A163 163 0 0 1 770 641.500H679A163 163 0 0 1 677.500 329.500z" />
      <path d="M709 346.500h28" strokeWidth="3" />
      <path d="M650 389h144" stroke="#d8d8d8" strokeWidth="2" /><path d="M653.500 388v-6h9v6" /><path d="M663 380v9" strokeWidth="2" />
      <rect x="651.500" y="580.500" width="142" height="2" stroke="#dedede" />
      <path d="M663 580v3M676 580v3M690 580v3M703 580v3M717 580v3M730 580v3M744 580v3M758 580v3M771 580v3M785 580v3" strokeWidth="1.500" />
      <g shapeRendering="auto">
        <circle cx="697" cy="485.500" r="3" strokeWidth="1.500" /><path d="M697 480v2M697 489v2M692 485.500h2M700 485.500h2" />
        <circle cx="750.500" cy="485.500" r="3" strokeWidth="1.500" /><path d="M750.500 480v2M750.500 489v2M745 485.500h2M754 485.500h2" />
        <path d="M723.500 483v5M721 485.500h5" strokeWidth="0.800" />
        <path d="M847 390l-4 3" strokeDasharray="2 1" /><circle cx="842.500" cy="394.500" r="1.500" strokeWidth="1.500" />
      </g>
      <path d={ticks.join("")} />
      <rect x="554.500" y="662.500" width="312" height="110" />
      <path d="M554.500 662v-3.500h39v4M573.500 658v2" />
      <path d="M593.500 662v110M632.500 662v110M671.500 662v110M710.500 662v110M749.500 662v110M788.500 662v110M827.500 662v110" />
      <g fill="#fff" stroke="none">
        {slots.map(([x, y]) => <rect key={x} x={x} y={y} width="4" height="18" />)}
        <path d="M859 862h15v6h-15zM878 862h19v6h-19zM901 862h3v6h-3z" />
      </g>
      <path d="M804 881h127v5H804zM804 888h91v5h-91z" fill="#911216" stroke="none" />
    </svg>
  );
}

function ViewCube() {
  const dir = "absolute text-xl leading-5 font-bold text-[#b4b5b7]";
  return (
    <div className="absolute top-[37px] right-[17px] h-[174px] w-[132px] font-['Liberation_Sans',sans-serif]">
      <svg width="124" height="124" className="absolute top-[6px] left-1" fill="none" aria-hidden="true"><circle cx="62" cy="62" r="54" stroke="#444a51" strokeWidth="13" /></svg>
      <span className={cx(dir, "top-[3px] left-[59px]")}>N</span>
      <span className={cx(dir, "top-[59px] left-0")}>W</span>
      <span className={cx(dir, "top-[59px] right-0")}>E</span>
      <span className={cx(dir, "top-[115px] left-[60px]")}>S</span>
      <button type="button" className="absolute top-[43px] left-[40px] flex h-[52px] w-[52px] items-center justify-center border border-[#8a8d90] bg-[#b0b1b2]">
        <span className="flex h-8 w-8 items-center justify-center bg-[#9fa5aa] font-['Open_Sans',sans-serif] text-xs font-bold text-[#4c5159]">TOP</span>
      </button>
      <button type="button" className="absolute bottom-0 left-[42px] flex h-[18px] w-12 items-center rounded-sm border border-[#7d8090] bg-[#9a9cab] pl-1 text-[11px] text-[#474a58]">
        WCS
        <Ico w={9} h={6} className="ml-[5px]"><path d="M1 1h7L4.500 5z" stroke="#c8cad4" /></Ico>
      </button>
    </div>
  );
}

function NavBar() {
  const line = { stroke: "#43484f", strokeWidth: 1.5 };
  const Arrow = () => <Ico w={6} h={4} className="my-[3px]"><path d="M0 0h6L3 4z" fill="#3e4347" /></Ico>;
  return (
    <div className="absolute top-[236px] right-1 flex h-[212px] w-8 flex-col items-center rounded border border-[#6c7073] bg-[#595d60]">
      <IconButton label="Close navigation bar" className="mt-px mr-[2px] self-end"><Ico w={8} h={8}><circle cx="4" cy="4" r="4" fill="#474b4f" /><path d="M2 2l4 4M6 2L2 6" stroke="#74787b" /></Ico></IconButton>
      <IconButton label="Steering wheel" className="mt-[8px]"><Ico><path d="M12 1h11v11A11 11 0 1 1 12 1z" fill="#5f6570" {...line} /><circle cx="12" cy="12" r="6" {...line} /><path d="M4 20l4-4M20 20l-4-4" {...line} /></Ico></IconButton>
      <IconButton label="Steering wheel options" className="mt-1"><Arrow /></IconButton>
      <span className="mb-[3px] h-px w-6 bg-[#686c6f]" />
      <IconButton label="Pan">
        <Ico><path d="M6 22c-1-4-5-7-5-9s3-1 5 2L5 5c0-2 2-2 3 0l2 7V3c0-3 3-3 3 0l1 9 2-8c1-2 3-1 3 0l-1 9 2-4c2-1 3 0 2 2-2 4-2 9-4 12z" fill="#5f6570" {...line} /></Ico>
      </IconButton>
      <IconButton label="Zoom" className="mt-1">
        <Ico><path d="M1 1l14 14M15 1L1 15M1 6V1h5M11 1h5v5M1 11v5h5" {...line} /><circle cx="16" cy="16" r="5" fill="#5f6570" {...line} /><path d="M20 20l4 4" stroke="#43484f" strokeWidth="3" /></Ico>
      </IconButton>
      <IconButton label="Zoom options" className="mt-1"><Arrow /></IconButton>
      <IconButton label="Orbit">
        <Ico><ellipse cx="12" cy="14" rx="11" ry="4" {...line} /><path d="M10 22V6H8l4-5 4 5h-2v16z" fill="#5f6570" {...line} /><path d="M9 14v7l-6-3z" fill="#43484f" /></Ico>
      </IconButton>
      <IconButton label="Orbit options" className="mt-[3px]"><Arrow /></IconButton>
      <span className="mb-[3px] h-px w-6 bg-[#686c6f]" />
      <IconButton label="Show motion">
        <Ico><path d="M1 1h5v5H1zM9 1h5v5H9zM17 1h5v5h-5zM1 10h15v12H1z" {...line} /><path d="M6 12v8l6-4z" fill="#43484f" /></Ico>
      </IconButton>
      <IconButton label="Navigation bar options" className="mt-auto mr-[2px] mb-px self-end"><Ico w={8} h={8}><circle cx="4" cy="4" r="4" fill="#474b4f" /><path d="M2 3h4M2 5h4" stroke="#74787b" /></Ico></IconButton>
    </div>
  );
}

function CommandLine() {
  return (
    <div className="absolute right-[374px] bottom-px left-[386px] flex items-end">
      <div className="flex h-10 w-[81px] shrink-0 items-center rounded-l border-2 border-r-0 border-[#5f6163] bg-linear-to-b from-[#6a6a6b] to-[#373737]">
        <Ico w={2} h={26} className="ml-[10px]"><path d="M1 0v26" stroke="#9a9a9a" strokeWidth="2" strokeDasharray="2 3" /></Ico>
        <IconButton label="Close command line" className="ml-[9px] w-4"><Ico w={16} h={14}><path d="M2 1l12 12M14 1L2 13" stroke="#d3d3d3" strokeWidth="2.500" /></Ico></IconButton>
        <IconButton label="Customize" className="ml-[14px] w-[22px]">
          <Ico w={22} h={22}><path d="M6 1l3 5-3 3-5-2c0 5 4 7 8 6l9 8c2 1 4-1 3-3l-8-8C14 4 11 0 6 1z" fill="#c3c7cc" stroke="#3b4045" /></Ico>
        </IconButton>
      </div>
      <div className="flex h-[42px] min-w-0 flex-1 items-center rounded border-2 border-[#6a6c6e] bg-[#bdbec0]">
        <IconButton label="Recent commands" className="ml-[6px] gap-[5px]">
          <Ico w={23} h={21}><rect x="1" y="1" width="21" height="19" rx="2" fill="#a3aebb" stroke="#8793a1" strokeWidth="2" /><path d="M5 6l5 4-5 4M12 15h6" stroke="#3d4651" strokeWidth="2" /></Ico>
          <Ico w={8} h={4}><path d="M0 0h8L4 4z" fill="#5b5b5b" /></Ico>
        </IconButton>
        <input aria-label="Command" placeholder="Type a command" className="ml-3 h-full min-w-0 flex-1 bg-transparent pt-[2px] font-['DejaVu_Sans_Mono',monospace] text-[27px] text-[#222] italic outline-none placeholder:text-[#77787a]" />
        <IconButton label="Command history" className="mr-1"><Ico w={12} h={6}><path d="M0 6h12L6 0z" fill="#1c1c1c" /></Ico></IconButton>
      </div>
    </div>
  );
}

function ModelSpace() {
  return (
    <main className="flex min-h-0 flex-1 bg-[#4b4b4b]">
      <div className="relative min-w-0 flex-1 overflow-hidden bg-[#212830]">
        <button type="button" className="absolute top-[6px] left-px text-xs leading-4 text-[#e8e8e8]">[−][Top][2D Wireframe]</button>
        <svg width="98" height="78" className="absolute top-0 left-[312px]" fill="none" stroke="#e8e8e8" aria-hidden="true">
          <path d="M0 28.500h46M51 28.500h46M48.500 0v26M48.500 31v45M46 26h5v5h-5z" />
        </svg>
        <Drawing />
        <div className="absolute top-[5px] right-[6px] flex">
          <IconButton label="Minimize drawing" className="h-5 w-5"><Ico w={12} h={12}><path d="M1 8h10v3H1z" fill="#eee" /></Ico></IconButton>
          <IconButton label="Restore drawing" className="h-5 w-5"><Ico w={12} h={12}><path d="M2 4h6v6H2zM4 2h7v6" stroke="#eee" strokeWidth="2" /></Ico></IconButton>
          <IconButton label="Close drawing window" className="h-5 w-5"><Ico w={12} h={12}><path d="M2 2l8 8M10 2l-8 8" stroke="#eee" strokeWidth="2.500" /></Ico></IconButton>
        </div>
        <ViewCube />
        <NavBar />
        <div className="absolute bottom-[15px] left-3 h-[76px] w-[76px] text-xl leading-5 font-light text-white">
          <svg width="60" height="60" className="absolute bottom-0 left-0" fill="none" stroke="#fff" aria-hidden="true"><path d="M5.500 4v51.500H56M1.500 50.500h9v9h-9z" /></svg>
          <span className="absolute top-0 left-2">Y</span>
          <span className="absolute right-[4px] bottom-1">X</span>
        </div>
        <CommandLine />
      </div>
      <div className="w-[9px] border-x border-[#a9c3e4] bg-[#bcd2ec]"><div className="h-[90px] bg-linear-to-b from-[#bcd2ec] to-[#dfe9f6]" /></div>
      <div className="mr-1 w-px bg-[#35b8e6]" />
    </main>
  );
}

/* ---------- status bar ---------- */

function FootTab({ d, fill, w, className, children }) {
  return (
    <button type="button" className={cx("relative h-[27px] shrink-0 text-[17px]", className)}>
      <svg width={w} height="27" className="absolute top-0 left-0" aria-hidden="true"><path d={d} fill={fill} /></svg>
      <span className="relative">{children}</span>
    </button>
  );
}

function Box({ className, children }) {
  return <div className={cx("flex h-[39px] shrink-0 items-center border-2 border-[#7b7b7b] bg-[#515151]", className)}>{children}</div>;
}

const DropMark = () => <Ico w={10} h={6}><path d="M0 0h10L5 6z" fill="#fff" /></Ico>;

const glow = "drop-shadow-[0_0_3px_#0a5fe0]";
const man = "M12 2l3 5v8c3 1 6 4 9 9-5 0-9-2-12-5-3 3-7 5-12 5 3-5 6-8 9-9V7z";

function StatusBar() {
  const dots = [];
  for (let y = 1; y < 22; y += 5) for (let x = 1; x < 22; x += 5) dots.push(`M${x} ${y}h2`);
  return (
    <footer className="flex h-[43px] items-start justify-between border-t-2 border-[#565656] bg-[#373737]">
      <div className="flex pl-3">
        <FootTab w={100} fill="url(#footOn)" d="M0 0h100c-10 2-9 16-15 24q-2 2-5 2H16q-4 0-5-3C7 14 8 3 0 0z" className="w-[94px] font-bold text-white">Model</FootTab>
        <FootTab w={108} fill="url(#footOff)" d="M0 0h108c-14 2-13 14-18 23q-2 3-7 3H12q-4 0-5-3C4 14 5 4 0 0z" className="w-[102px] pr-[10px] text-[#b4b4b4]">Layout1</FootTab>
        <IconButton label="New layout"><Ico w={34} h={25}><path d="M11 .5h22c0 15-4 23-15 23H.5C0 11 4 3 11 .5z" fill="#4b4b4b" stroke="#5f5f5f" /><path d="M17 6v12M11 12h12" stroke="#c4c4c4" strokeWidth="3" /></Ico></IconButton>
      </div>
      <div className="flex gap-[2px] bg-[#4a4a4a] pl-[2px] text-[17px] text-white">
        <Box className="w-[76px] justify-center"><button type="button">MODEL</button></Box>
        <Box className="w-[98px] pl-[7px]">
          <IconButton label="Grid"><Ico><path d="M4 1v22M9 1v22M14 1v22M19 1v22" stroke="#cbcbcb" strokeWidth="1.500" /><path d="M1 4h22M1 9h22M1 14h22M1 20h22" stroke="#cbcbcb" strokeDasharray="2 1" /></Ico></IconButton>
          <IconButton label="Snap" className="ml-3"><Ico w={22}><path d={dots.join("")} stroke="#cbcbcb" strokeWidth="2" /></Ico></IconButton>
          <IconButton label="Snap options" className="ml-[13px]"><DropMark /></IconButton>
        </Box>
        <div className="flex">
          <Box className="w-[155px] justify-between border-r-0 pr-[7px] pl-2">
            <IconButton label="Ortho"><Ico><path d="M3 3v18h19M3 15h6v6" stroke="#bdbdbd" strokeWidth="1.500" /></Ico></IconButton>
            <IconButton label="Polar tracking"><Ico className={glow}><circle cx="11" cy="12" r="9.500" stroke="#2186f0" strokeWidth="2.500" /><path d="M11 12h13M11 12l9-9" stroke="#2186f0" strokeWidth="2" /></Ico></IconButton>
            <IconButton label="Polar options"><DropMark /></IconButton>
            <IconButton label="Isometric"><Ico w={26} h={28}><path d="M13 0v28M1 2l24 24" stroke="#a5a5a5" strokeWidth="2" /></Ico></IconButton>
            <IconButton label="Isometric options"><DropMark /></IconButton>
          </Box>
          <Box className="w-[97px] justify-between pr-[6px] pl-1">
            <IconButton label="Object snap tracking"><Ico w={26} className={glow}><path d="M20 3L2 22h23" stroke="#2186f0" strokeWidth="2" /><path d="M9 10h4v4H9z" fill="#2186f0" /></Ico></IconButton>
            <IconButton label="Object snap"><Ico className={glow}><path d="M3 3h20v20H3z" stroke="#2186f0" strokeWidth="2" /><path d="M1 1h6v6H1z" fill="#00e000" stroke="#063806" strokeWidth="2" /></Ico></IconButton>
            <IconButton label="Object snap options"><DropMark /></IconButton>
          </Box>
        </div>
        <Box className="w-[160px] justify-between pr-[5px] pl-[6px]">
          <IconButton label="Annotation visibility"><Ico h={26} className={glow}><path d={man} fill="#2491ff" /><circle cx="18" cy="7" r="4" stroke="#2491ff" strokeWidth="2" fill="#515151" /></Ico></IconButton>
          <IconButton label="Auto scale"><Ico h={26}><path d={man} fill="#c6c6c6" /><path d="M16 1l6 3-4 3 6 1-7 6 1-5-4-1z" fill="#c6c6c6" stroke="#515151" /></Ico></IconButton>
          <IconButton label="Annotation scale"><Ico h={26}><path d={man} fill="#c6c6c6" /></Ico></IconButton>
          <button type="button" className="flex items-center gap-[6px]">1:1<DropMark /></button>
        </Box>
        <div className="flex">
          <Box className="w-[61px] justify-between border-r-0 pr-[6px] pl-[9px]">
            <IconButton label="Workspace"><Ico w={20} h={20}><circle cx="10" cy="10" r="5" stroke="#c6c6c6" strokeWidth="4.500" /><circle cx="10" cy="10" r="8" stroke="#c6c6c6" strokeWidth="3" strokeDasharray="3.600 2.680" /></Ico></IconButton>
            <IconButton label="Workspace options"><DropMark /></IconButton>
          </Box>
          <Box className="w-[39px] justify-center"><IconButton label="Annotation monitor"><Ico w={22} h={22}><path d="M11 0v22M0 11h22" stroke="#cfcfcf" strokeWidth="2.500" /></Ico></IconButton></Box>
        </div>
        <Box className="w-10 justify-center"><IconButton label="Isolate objects"><Ico><path d="M1 1h9v9H1z" stroke="#bdbdbd" strokeWidth="2" /><circle cx="18" cy="11" r="4.500" stroke="#bdbdbd" strokeWidth="2" /><path d="M10 14l5 8H5z" stroke="#bdbdbd" strokeWidth="2" /></Ico></IconButton></Box>
        <Box className="w-[39px] justify-center"><IconButton label="Graphics performance"><Ico w={26} h={26} className={glow}><circle cx="13" cy="13" r="11.500" fill="#0b529b" stroke="#1583ef" strokeWidth="2" /><path d="M19 11l-5 5" stroke="#1583ef" strokeWidth="2.500" /><circle cx="13" cy="17" r="2" fill="#1583ef" /></Ico></IconButton></Box>
        <Box className="w-[33px] justify-center border-r-0">
          <IconButton label="Application status"><Ico><path d="M1 1h13l5 5v12H1z" fill="#456f9f" /><path d="M1 12h14v8H1z" fill="#f7d21b" /><path d="M1 1h8v7H1z" fill="#fff" /><circle cx="5" cy="4" r="2" stroke="#2d5f92" strokeWidth="1.500" /><path d="M5 6v6M8 4h6" stroke="#fff" strokeWidth="1.500" /><path d="M17 11l6 12H11z" fill="#ffe21c" stroke="#e5670e" strokeWidth="2" /><path d="M17 15v4M17 20v2" stroke="#111" strokeWidth="2" /></Ico></IconButton>
        </Box>
        <Box className="w-[74px] gap-[13px] border-r-0 pl-[5px]">
          <IconButton label="Clean screen"><Ico><rect x="1" y="4" width="22" height="17" rx="1" stroke="#c9c9c9" strokeWidth="2" /><path d="M14 7h6v6zM4 12v6h6z" fill="#c9c9c9" /><path d="M13 11l5-3M11 14l-5 3" stroke="#c9c9c9" strokeWidth="2" /></Ico></IconButton>
          <IconButton label="Customization"><Ico w={23} h={20}><path d="M0 2h23M0 10h23M0 18h23" stroke="#cfcfcf" strokeWidth="2.500" /></Ico></IconButton>
        </Box>
      </div>
    </footer>
  );
}

export default function App() {
  return (
    <div className="flex h-screen flex-col overflow-hidden bg-[#373737] font-['Open_Sans','Noto_Sans',sans-serif]">
      <Defs />
      <Header />
      <Ribbon />
      <FileTabs />
      <ModelSpace />
      <StatusBar />
    </div>
  );
}
